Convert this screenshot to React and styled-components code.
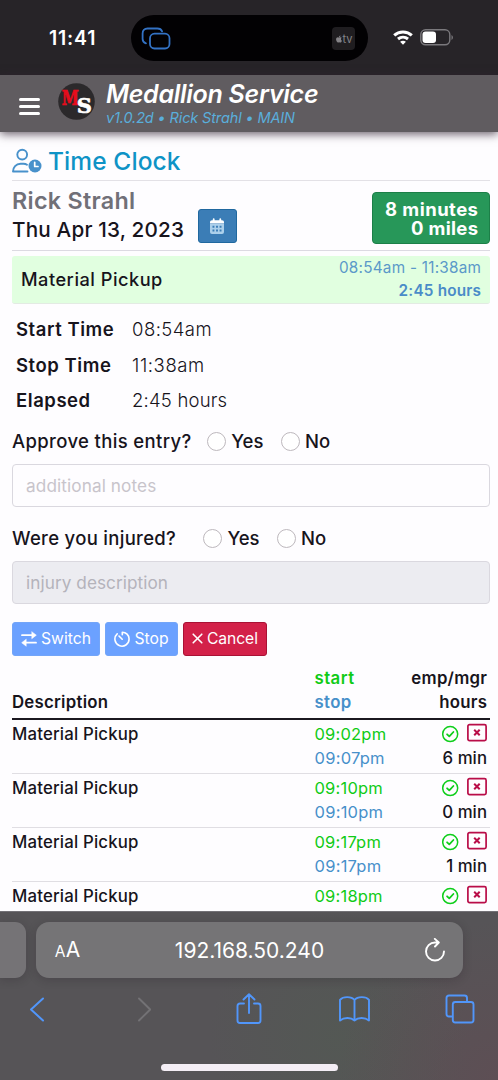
import React from "react";
import styled, { createGlobalStyle } from "styled-components";
import { FaApple } from "react-icons/fa";

const Global = createGlobalStyle`
  * { box-sizing: border-box; }
  html, body { margin: 0; padding: 0; background: #fdfcfe; }
  body { font-family: Inter, "Liberation Sans", sans-serif; color: #17141c; }
`;

const Phone = styled.div`
  width: 498px;
  height: 1080px;
  display: flex;
  flex-direction: column;
  overflow: hidden;
  background: #fefdff;
`;

const Label = styled.span`
  display: inline-block;
  white-space: nowrap;
  font-size: ${(p) => p.$size || 17}px;
  font-weight: ${(p) => p.$weight || 400};
  line-height: ${(p) => p.$line || 24}px;
  letter-spacing: ${(p) => p.$track || 0}px;
  margin-right: ${(p) => -(p.$track || 0)}px;
  color: ${(p) => p.$color || "inherit"};
`;

/* status bar */
const StatusBar = styled.div`
  flex: none;
  height: 75px;
  background: #272428;
  display: flex;
  align-items: flex-start;
  padding: 15px 44px 0 49px;
`;
const Clock = styled.div`
  width: 82px;
  padding-top: 8px;
  font-size: 19.5px;
  font-weight: 600;
  line-height: 30px;
  letter-spacing: 0.8px;
  color: #fff;
`;
const Island = styled.div`
  width: 237px;
  height: 46px;
  border-radius: 23px;
  background: #020103;
  display: flex;
  align-items: center;
  justify-content: space-between;
  padding: 1px 13px 0 9px;
`;
const TvBadge = styled.div`
  width: 23px;
  height: 23px;
  border-radius: 4px;
  background: #1f1d20;
  color: #858387;
  display: flex;
  align-items: center;
  justify-content: center;
  font-size: 11px;
  line-height: 12px;
`;
const StatusIcons = styled.div`
  margin-left: auto;
  padding-top: 14px;
  display: flex;
  align-items: center;
  gap: 7px;
`;

/* application header */
const Header = styled.header`
  flex: none;
  position: relative;
  z-index: 1;
  height: 57px;
  background: #605c60;
  box-shadow: 0 2px 9px rgba(50, 35, 50, 0.75);
  display: flex;
  padding: 0 18px;
`;
const MenuButton = styled.div`
  width: 40px;
  padding: 23px 0 0 1px;
  display: flex;
  flex-direction: column;
  gap: 4.5px;
`;
const MenuLine = styled.span`
  width: 20.5px;
  height: 2.7px;
  border-radius: 2px;
  background: #fff;
`;
const Logo = styled.svg`
  margin-top: 8px;
  width: 37px;
  height: 37px;
  overflow: visible;
`;
const Brand = styled.div`
  padding: 5px 0 0 11px;
  display: flex;
  flex-direction: column;
  font-style: italic;
`;

/* page content */
const Content = styled.main`
  height: 779px;
  flex: none;
  overflow: hidden;
  padding: 12px 8px 0 12px;
`;
const TitleRow = styled.div`
  height: 37px;
  border-bottom: 1px solid #e3e1e6;
  display: flex;
  align-items: center;
  gap: 6px;
  padding-bottom: 2px;
`;
const ProfileRow = styled.div`
  height: 70px;
  border-bottom: 1px solid #dcdae2;
  display: flex;
  align-items: flex-start;
  justify-content: space-between;
`;
const Profile = styled.div`
  padding-top: 6px;
`;
const DateLine = styled.div`
  display: flex;
  gap: 14px;
`;
const DateButton = styled.div`
  width: 39px;
  height: 34px;
  margin-top: -6px;
  border-radius: 3px;
  border: 1px solid #20689f;
  background: #3b7db6;
  display: flex;
  align-items: center;
  justify-content: center;
`;
const Totals = styled.div`
  width: 118px;
  height: 52px;
  margin-top: 11px;
  padding: 7px 11px 0 0;
  border: 1px solid #1c7f48;
  border-radius: 4px;
  background: #279759;
  color: #fff;
  display: flex;
  flex-direction: column;
  align-items: flex-end;
`;
const Banner = styled.div`
  height: 48px;
  margin-top: 5px;
  padding: 0 9px 2px;
  border-radius: 3px;
  border-bottom: 1px solid #e3ebe3;
  background: #e1ffe0;
  display: flex;
  justify-content: space-between;
  align-items: center;
`;
const BannerTimes = styled.div`
  display: flex;
  flex-direction: column;
  align-items: flex-end;
`;
const Details = styled.div`
  padding: 7px 4px 0;
`;
const Detail = styled.div`
  height: 35.7px;
  display: grid;
  grid-template-columns: 116px 1fr;
  align-items: center;
`;
const Question = styled.div`
  height: 34px;
  margin-top: ${(p) => p.$top}px;
  display: flex;
  align-items: center;
`;
const Choice = styled.span`
  display: flex;
  align-items: center;
  gap: 5px;
  margin-left: ${(p) => p.$gap}px;
`;
const Radio = styled.span`
  width: 19px;
  height: 19px;
  margin-top: 1px;
  border-radius: 50%;
  border: 1px solid #bdb8bd;
  background: #fff;
`;
const Field = styled.div`
  height: 43px;
  margin-top: ${(p) => p.$top}px;
  padding: 0 13px;
  border: 1.5px solid #dad8df;
  border-radius: 4px;
  background: ${(p) => (p.$disabled ? "#ececf1" : "#fefdff")};
  color: ${(p) => (p.$disabled ? "#b4b3bb" : "#c8c4cb")};
  display: flex;
  align-items: center;
`;
const Actions = styled.div`
  display: flex;
  gap: 5px;
  margin-top: 18px;
`;
const Action = styled.div`
  width: ${(p) => p.$width}px;
  height: 34px;
  border-radius: 3px;
  border: 1px solid ${(p) => (p.$danger ? "#a91235" : "#73a5f8")};
  background: ${(p) => (p.$danger ? "#d32149" : "#6ba1ff")};
  color: #fff;
  display: flex;
  align-items: center;
  justify-content: center;
  gap: 4px;
`;

/* entries */
const GRID = "302.5px 1fr auto";
const TableHead = styled.div`
  margin-top: 10px;
  height: 54px;
  border-bottom: 2px solid #1b1820;
  display: grid;
  grid-template-columns: ${GRID};
  align-items: end;
  padding: 0 3px 4px 0;
`;
const Entry = styled.div`
  height: 54px;
  border-bottom: 1.5px solid #e0dee3;
  display: grid;
  grid-template-columns: ${GRID};
  padding: 2px 3px 0 0;
`;
const Stack = styled.div`
  display: flex;
  flex-direction: column;
  align-items: ${(p) => (p.$end ? "flex-end" : "flex-start")};
`;
const Marks = styled.div`
  height: 24px;
  display: flex;
  gap: 8px;
  align-items: flex-start;
`;

/* browser chrome */
const Browser = styled.footer`
  flex: none;
  height: 169px;
  border-top: 1px solid #737176;
  background:
    radial-gradient(circle at 100% 100%, rgba(104, 70, 80, 0.4), transparent 160px),
    radial-gradient(circle at 68% 75%, rgba(80, 94, 80, 0.4), transparent 130px),
    #565457;
`;
const AddressRow = styled.div`
  display: flex;
  gap: 10px;
  padding-top: 10px;
`;
const NextTab = styled.div`
  width: 26px;
  height: 56px;
  border-radius: 0 11px 11px 0;
  background: #757376;
  box-shadow: 0 2px 10px rgba(30, 25, 30, 0.22);
`;
const Address = styled.div`
  width: 427px;
  height: 56px;
  padding-top: 1px;
  border-radius: 13px;
  background: #757476;
  box-shadow: 0 2px 10px rgba(30, 25, 30, 0.22);
  color: #fff;
  display: grid;
  grid-template-columns: 63px 1fr 57px;
  align-items: center;
  justify-items: center;
`;
const AddressText = styled.div`
  padding: 1px 6px 0 0;
`;
const TextSize = styled.span`
  display: flex;
  align-items: baseline;
  gap: 0.5px;
  padding-top: 1px;
  line-height: 24px;
  font-size: 15.5px;
`;
const BigA = styled.span`
  font-size: 21px;
`;
const Toolbar = styled.nav`
  height: 62px;
  padding: 0 22px 0 21px;
  display: flex;
  align-items: center;
  justify-content: space-between;
`;
const Slot = styled.span`
  width: 32px;
  height: 32px;
  display: flex;
  align-items: center;
  justify-content: center;
`;
const HomeBar = styled.div`
  width: 177px;
  height: 7px;
  margin: 24px 0 0 161px;
  border-radius: 4px;
  background: #f4eef5;
`;

const Icon = ({ w, h, stroke = "currentColor", sw = 1.8, children }) => (
  <svg width={w} height={h} viewBox={`0 0 ${w} ${h}`} fill="none" stroke={stroke}
    strokeWidth={sw} strokeLinecap="round" strokeLinejoin="round">{children}</svg>
);

const MirrorIcon = () => (
  <Icon w={31} h={24} stroke="#3372c4" sw={1.8}>
    <path d="M6 16.300C3.600 15.600 2.600 14.300 2.600 12V6.500C2.600 3.200 4.300 1.500 7.600 1.500H17.300C19.800 1.500 21.300 2.300 22.100 4.300" />
    <rect x="10" y="6.700" width="19.500" height="14.800" rx="4.500" />
  </Icon>
);
const WifiIcon = () => (
  <Icon w={20} h={15} stroke="#fff" sw={3}>
    <path d="M1.200 5.300C6 .800 14 .800 18.800 5.300M5 9C8 6.500 12 6.500 15 9" strokeLinecap="butt" />
    <path d="M10 14.800L7.100 11.700C8.700 10.400 11.300 10.400 12.900 11.700Z" fill="#fff" stroke="none" />
  </Icon>
);
const BatteryIcon = () => (
  <Icon w={34} h={17} stroke="#7b797d" sw={1.400}>
    <rect x=".8" y=".8" width="29" height="15" rx="4.800" />
    <rect x="2.500" y="2.500" width="13.500" height="11.600" rx="3" fill="#fff" stroke="none" />
    <path d="M31.500 6V11C33.400 10 33.400 7 31.500 6Z" fill="#7b797d" stroke="none" />
  </Icon>
);
const UserClockIcon = () => (
  <Icon w={30} h={26} stroke="#4891cb" sw={1.900}>
    <circle cx="10.200" cy="6.600" r="4.900" />
    <path d="M15 16.700C14 16 13 15.700 11.500 15.700H8.500C4 15.700 1 19.300 1 23.500H15.500" />
    <circle cx="23" cy="18" r="6.500" fill="#4891cb" stroke="none" />
    <path d="M22.700 14.300V18.500H26" stroke="#fff" strokeWidth="1.700" />
  </Icon>
);
const CalendarIcon = () => (
  <Icon w={16} h={17} sw={0}>
    <path d="M1 6H15V14Q15 16 13 16H3Q1 16 1 14Z" fill="#acd0eb" />
    <path d="M1 5.500V4Q1 2.300 3 2.300H13Q15 2.300 15 4V5.500Z" fill="#fff" />
    <path d="M4.700 1.200V4M11.300 1.200V4" stroke="#fff" strokeWidth="1.800" />
    <path d="M3.500 8.700H12.500M3.500 12.500H12.500" stroke="#3b7db6" strokeWidth="1.900" strokeDasharray="1.900 1.650" strokeLinecap="butt" />
  </Icon>
);
const SwitchIcon = () => (
  <Icon w={16} h={16} stroke="#fff" sw={1.800}>
    <path d="M1 4.200H11M15 11.700H5" />
    <path d="M11 .9L15.300 4.200L11 7.500ZM5 8.400L.7 11.700L5 15Z" fill="#fff" strokeWidth=".6" />
  </Icon>
);
const StopIcon = () => (
  <Icon w={16} h={16} stroke="#fff" sw={1.600}>
    <path d="M8.300 3.800V1.200C12 1.200 15.100 4.200 15.100 8A7.100 7.100 0 1 1 3.200 2.800M5 5L8.200 8.200" />
  </Icon>
);
const CancelIcon = () => (
  <Icon w={11} h={12} stroke="#fff" sw={1.600}>
    <path d="M1.200 1.200L9.800 9.800M9.800 1.200L1.200 9.800" />
  </Icon>
);
const ApprovedIcon = () => (
  <Icon w={17} h={24} stroke="#0fce1b" sw={1.500}>
    <circle cx="8.200" cy="12.100" r="7.500" />
    <path d="M5.100 12.300L7.300 14.400L11.400 10" strokeWidth="1.800" />
  </Icon>
);
const RejectedIcon = () => (
  <Icon w={20} h={22} stroke="#b90d48" sw={1.700}>
    <rect x=".9" y="2.600" width="18.200" height="16" rx="1.600" />
    <path d="M7.200 7.800L12.700 13.300M12.700 7.800L7.200 13.300" strokeWidth="2" strokeLinecap="butt" />
  </Icon>
);
const ReloadIcon = () => (
  <Icon w={22} h={26} stroke="#fff" sw={1.900}>
    <path d="M20 13.500A9 9 0 1 1 11 4.500H14.500M10.800 .9L14.800 4.500L11 8.500" />
  </Icon>
);
const BLUE = "#5196fa";
const BackIcon = () => (
  <Icon w={16} h={26} stroke={BLUE} sw={2}><path d="M14 2.500L2 13.500L14 24.500" /></Icon>
);
const ForwardIcon = () => (
  <Icon w={16} h={26} stroke="#737275" sw={1.900}><path d="M4 2.500L15.200 13.500L4 24.500" /></Icon>
);
const ShareIcon = () => (
  <Icon w={26} h={32} stroke={BLUE} sw={1.900}>
    <path d="M8 10.500H4Q1.500 10.500 1.500 13V27.500Q1.500 30 4 30H22Q24.500 30 24.500 27.500V13Q24.500 10.500 22 10.500H18M13 20V1.500M7.500 6.500L13 1.200L18.500 6.500" />
  </Icon>
);
const BookIcon = () => (
  <Icon w={32} h={28} stroke={BLUE} sw={1.900}>
    <path d="M16.500 25.500V5C13.500 1.200 5 1.200 2 4.800V25.500C6 22.200 13 22.200 16.500 25.500C20 22.200 27 22.200 31 25.500V4.800C28 1.200 19.500 1.200 16.500 5" />
  </Icon>
);
const TabsIcon = () => (
  <Icon w={30} h={30} stroke={BLUE} sw={1.900}>
    <path d="M6.500 22.500H4Q1.500 22.500 1.500 20V4Q1.500 1.500 4 1.500H19.500Q22 1.500 22 4V7" />
    <rect x="7.800" y="8" width="20.700" height="20.500" rx="2.500" />
  </Icon>
);

const DETAILS = [
  { name: "Start Time", value: "08:54am", track: 0.45 },
  { name: "Stop Time", value: "11:38am", track: 0.6 },
  { name: "Elapsed", value: "2:45 hours", track: 0.2 },
];
const ENTRIES = [
  ["09:02pm", "09:07pm", "6 min"],
  ["09:10pm", "09:10pm", "0 min"],
  ["09:17pm", "09:17pm", "1 min"],
  ["09:18pm", "", ""],
];

const YesNo = ({ gap }) => (
  <>
    <Choice $gap={gap}><Radio /><Label $size={18.5} $weight={500}>Yes</Label></Choice>
    <Choice $gap={17.5}><Radio /><Label $size={18.5} $weight={500}>No</Label></Choice>
  </>
);

export default function App() {
  return (
    <Phone>
      <Global />
      <StatusBar>
        <Clock>11:41</Clock>
        <Island>
          <MirrorIcon />
          <TvBadge><FaApple size={8} />tv</TvBadge>
        </Island>
        <StatusIcons><WifiIcon /><BatteryIcon /></StatusIcons>
      </StatusBar>

      <Header>
        <MenuButton><MenuLine /><MenuLine /><MenuLine /></MenuButton>
        <Logo viewBox="0 0 37 37">
          <circle cx="18.500" cy="18.500" r="18.300" fill="#2b292b" />
          <g fontFamily="DejaVu Serif, serif" fontWeight="700" strokeWidth=".7">
            <text transform="translate(3.800 22) scale(.77 1)" fontSize="20" fill="#e80c1c" stroke="#e80c1c">M</text>
            <text transform="translate(18.800 29.700)" fontSize="21" fill="#fff" stroke="#fff">S</text>
          </g>
        </Logo>
        <Brand>
          <Label $size={25} $weight={600} $line={28} $track={-0.28} $color="#fff">Medallion Service</Label>
          <Label $size={14.5} $line={20} $track={-0.13} $color="#5aaedb">v1.0.2d • Rick Strahl • MAIN</Label>
        </Brand>
      </Header>

      <Content>
        <TitleRow>
          <UserClockIcon />
          <Label $size={24.5} $weight={500} $line={30} $track={0.1} $color="#0e93c6">Time Clock</Label>
        </TitleRow>

        <ProfileRow>
          <Profile>
            <Label $size={23.3} $weight={600} $line={28} $track={0.3} $color="#717078">Rick Strahl</Label>
            <DateLine>
              <Label $size={20.7} $weight={500} $line={30} $track={0.17}>Thu Apr 13, 2023</Label>
              <DateButton><CalendarIcon /></DateButton>
            </DateLine>
          </Profile>
          <Totals>
            <Label $size={18.5} $weight={700} $line={19} $track={0.45}>8 minutes</Label>
            <Label $size={18.5} $weight={700} $line={19} $track={0.3}>0 miles</Label>
          </Totals>
        </ProfileRow>

        <Banner>
          <Label $size={18.2} $weight={500} $track={0.5}>Material Pickup</Label>
          <BannerTimes>
            <Label $size={15.3} $line={23} $track={0.25} $color="#5b99c9">08:54am - 11:38am</Label>
            <Label $size={15.3} $weight={600} $line={23} $track={0.2} $color="#4a8cc8">2:45 hours</Label>
          </BannerTimes>
        </Banner>

        <Details>
          {DETAILS.map(({ name, value, track }) => (
            <Detail key={name}>
              <Label $size={18.5} $weight={600} $track={0.55}>{name}</Label>
              <Label $size={18.5} $weight={300} $track={track}>{value}</Label>
            </Detail>
          ))}
        </Details>

        <Question $top={6}>
          <Label $size={18.5} $weight={500} $track={0.36}>Approve this entry?</Label>
          <YesNo gap={16} />
        </Question>
        <Field $top={6}><Label $size={17.2} $track={0.1}>additional notes</Label></Field>

        <Question $top={14}>
          <Label $size={18.5} $weight={500} $track={0.3}>Were you injured?</Label>
          <YesNo gap={27.5} />
        </Question>
        <Field $top={6} $disabled><Label $size={17.2} $track={0.06}>injury description</Label></Field>

        <Actions>
          <Action $width={88}><SwitchIcon /><Label $size={15.7}>Switch</Label></Action>
          <Action $width={73}><StopIcon /><Label $size={15.7}>Stop</Label></Action>
          <Action $width={84} $danger><CancelIcon /><Label $size={15.7} $track={-0.1}>Cancel</Label></Action>
        </Actions>

        <TableHead>
          <Label $size={16.8} $weight={600} $track={0.25}>Description</Label>
          <Stack>
            <Label $size={16.8} $weight={600} $track={0.45} $color="#10cb16">start</Label>
            <Label $size={16.8} $weight={600} $track={0.35} $color="#4790ca">stop</Label>
          </Stack>
          <Stack $end>
            <Label $size={16.8} $weight={600} $track={0.25}>emp/mgr</Label>
            <Label $size={16.8} $weight={600} $track={0.25}>hours</Label>
          </Stack>
        </TableHead>
        {ENTRIES.map(([start, stop, hours]) => (
          <Entry key={start}>
            <Label $size={16.8} $weight={500} $track={0.17}>Material Pickup</Label>
            <Stack>
              <Label $size={16.5} $track={0.2} $color="#10cb16">{start}</Label>
              <Label $size={16.5} $track={0.25} $color="#4790ca">{stop}</Label>
            </Stack>
            <Stack $end>
              <Marks><ApprovedIcon /><RejectedIcon /></Marks>
              <Label $size={16.8} $weight={500} $track={0.05}>{hours}</Label>
            </Stack>
          </Entry>
        ))}
      </Content>

      <Browser>
        <AddressRow>
          <NextTab />
          <Address>
            <TextSize>A<BigA>A</BigA></TextSize>
            <AddressText><Label $size={21}>192.168.50.240</Label></AddressText>
            <ReloadIcon />
          </Address>
        </AddressRow>
        <Toolbar>
          <Slot><BackIcon /></Slot>
          <Slot><ForwardIcon /></Slot>
          <Slot><ShareIcon /></Slot>
          <Slot><BookIcon /></Slot>
          <Slot><TabsIcon /></Slot>
        </Toolbar>
        <HomeBar />
      </Browser>
    </Phone>
  );
}
